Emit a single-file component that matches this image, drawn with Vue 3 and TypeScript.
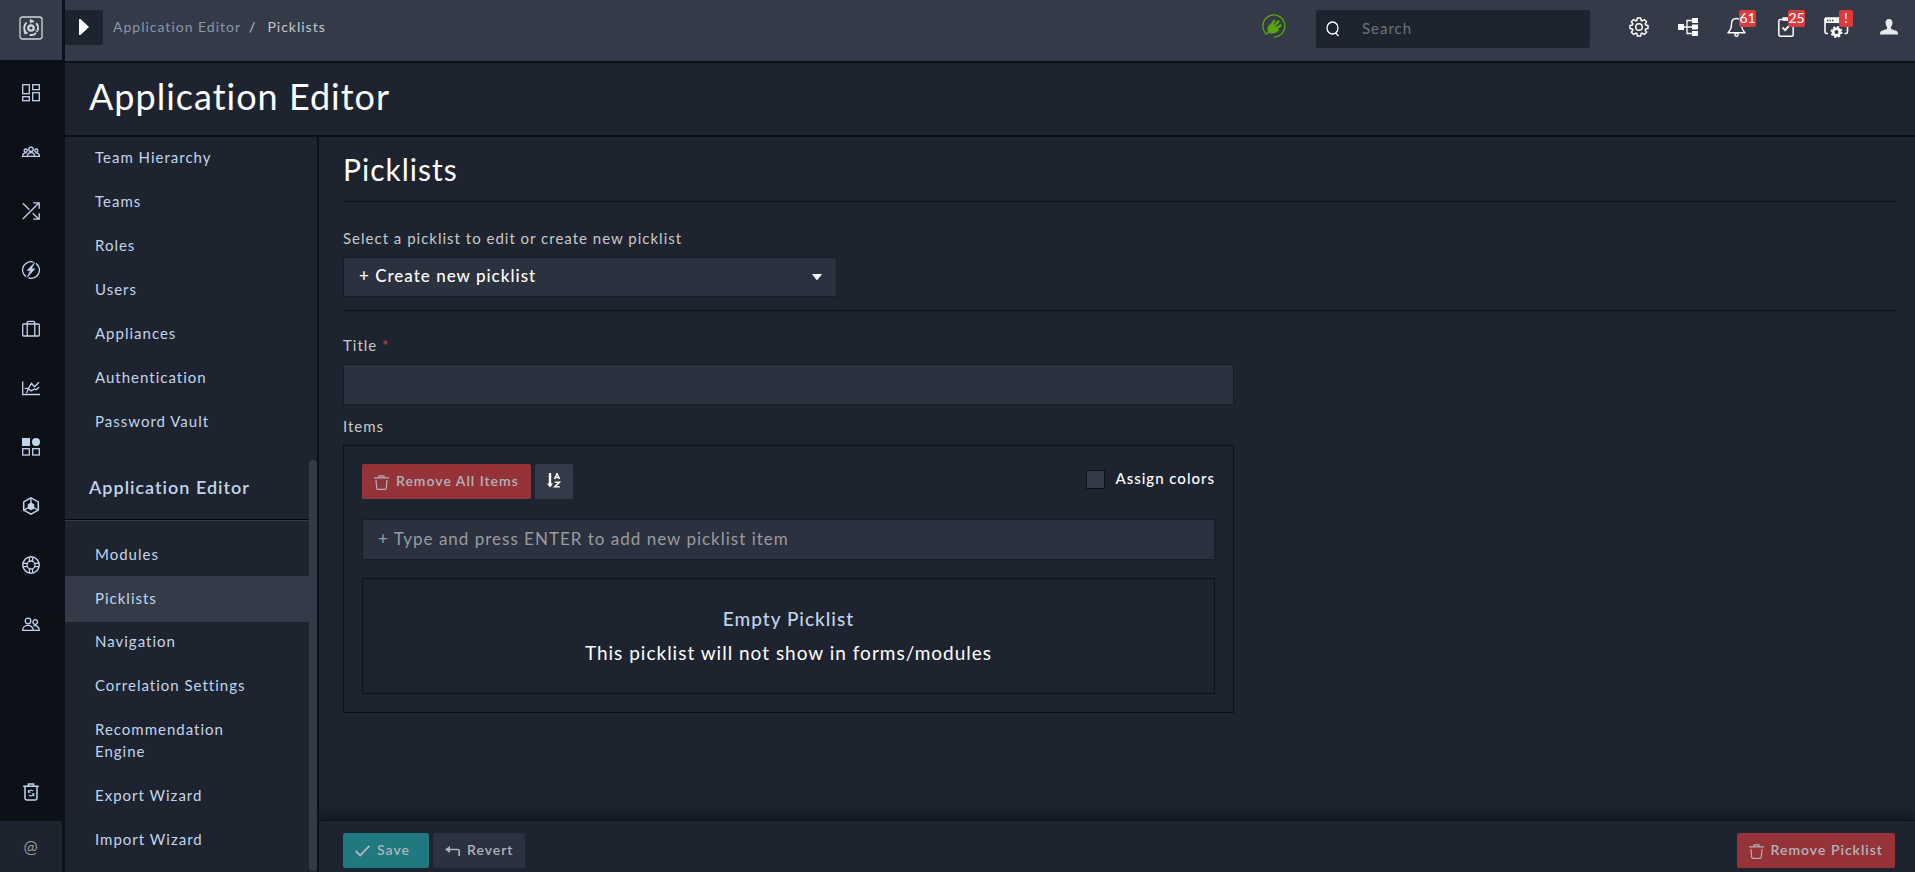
<script setup lang="ts">
import { ref } from 'vue'

interface NavItem {
  label: string
  active?: boolean
}

const securityItems: NavItem[] = [
  { label: 'Team Hierarchy' },
  { label: 'Teams' },
  { label: 'Roles' },
  { label: 'Users' },
  { label: 'Appliances' },
  { label: 'Authentication' },
  { label: 'Password Vault' },
]

const editorItems: NavItem[] = [
  { label: 'Modules' },
  { label: 'Picklists', active: true },
  { label: 'Navigation' },
  { label: 'Correlation Settings' },
  { label: 'Recommendation Engine' },
  { label: 'Export Wizard' },
  { label: 'Import Wizard' },
]

const railNames = [
  'Dashboard',
  'Queue',
  'Playbooks',
  'Automation',
  'Cases',
  'Reports',
  'Widgets',
  'Resources',
  'Help',
  'People',
] as const

const picklist = ref('new')
const title = ref('')
const newItem = ref('')
const search = ref('')
const assignColors = ref(false)
</script>

<template>
  <div class="app">
    <aside class="rail">
      <a href="#" class="logo" aria-label="Home">
        <svg width="24" height="24" viewBox="0 0 24 24" fill="none" stroke="#d3d6db">
          <rect x="1" y="1" width="22" height="22" rx="2.5" stroke-width="1.3" />
          <circle cx="12" cy="12" r="2.7" stroke-width="2.2" />
          <path d="M8.2 17.6A7 7 0 0 1 7.6 6.6M10.6 5.2A7 7 0 0 1 15 5.7M17.2 7.2A7 7 0 0 1 18.6 14M17.2 16.8A7 7 0 0 1 10.5 18.8" stroke-width="1.8" />
          <path d="M11 3.2l3 2-3 2M19.8 13l-1.6 3-2.2-2.4M5 14.5l.8 3.5 2.8-1" stroke-width="1" />
        </svg>
      </a>
      <nav class="rail-nav" aria-label="Main">
        <a v-for="(name, i) in railNames" :key="name" href="#" class="rail-link" :aria-label="name">
          <svg width="18" height="18" viewBox="0 0 18 18" fill="none" stroke="currentColor" stroke-width="1.3">
            <template v-if="i === 0">
              <rect x=".7" y=".7" width="6.6" height="9" />
              <rect x="10.7" y=".7" width="6.6" height="5" />
              <rect x=".7" y="12.7" width="6.6" height="4" />
              <rect x="10.7" y="8.7" width="6.6" height="8" />
            </template>
            <template v-else-if="i === 1">
              <circle cx="9" cy="6.3" r="2.2" />
              <circle cx="3.7" cy="7.6" r="1.6" />
              <circle cx="14.3" cy="7.6" r="1.6" />
              <path d="M5.5 13.4c0-5 7-5 7 0zM5 13.4H.6c0-2.5 1.5-3.8 4-3.4M13 13.4h4.4c0-2.5-1.5-3.8-4-3.4" />
            </template>
            <template v-else-if="i === 2">
              <path d="M.8 17L16.6 1.2M.8 1.2l6.6 6.6M10.8 11.2l5.8 5.8M11.2.8h6v6M11.2 17.2h6v-6" />
            </template>
            <template v-else-if="i === 3">
              <path d="M11.5 1.2A8.2 8.2 0 0 0 4 15.6M6.5 16.8A8.2 8.2 0 0 0 14 2.4" />
              <path d="M12.8 1.3L5 9.6h3.4L5 16.4l8-8.6H9.6z" fill="currentColor" stroke-width=".5" />
            </template>
            <template v-else-if="i === 4">
              <rect x=".7" y="4" width="16.6" height="12" rx="1" />
              <path d="M5.2 16V2.8q0-1.5 1.5-1.5h4.6q1.5 0 1.5 1.5V16" />
            </template>
            <template v-else-if="i === 5">
              <path d="M.7 2.5v13H18M2.6 9.4H6l3 2.5 3.5-2 1.6.8 3-2.4M4.5 14l2.8-6.2 2.2-3.4 3 3.4L17 3.2" />
            </template>
            <template v-else-if="i === 6">
              <rect x="0" y="0" width="8" height="8" fill="currentColor" stroke="none" />
              <circle cx="14" cy="4" r="4" fill="currentColor" stroke="none" />
              <rect x=".7" y="10.7" width="6.6" height="6.3" />
              <rect x="10.7" y="10.7" width="6.6" height="6.3" />
            </template>
            <template v-else-if="i === 7">
              <path d="M9 .9l7.3 4v8.2L9 17.1l-7.3-4V4.9z" stroke-width="1.5" />
              <path d="M9 1v5M2 13l4-2.2M16 13l-4-2.2" />
              <path d="M9 6l2.600 1.900v3.200L9 12.400l-2.600-1.300V7.900z" fill="currentColor" />
            </template>
            <template v-else-if="i === 8">
              <circle cx="9" cy="9" r="8.2" stroke-width="1.5" />
              <circle cx="9" cy="9" r="4" />
              <path d="M7.4 1v4.2M10.6 1v4.2M7.4 12.8V17M10.6 12.8V17M1 7.4h4.2M1 10.6h4.2M12.8 7.4H17M12.8 10.6H17" />
            </template>
            <template v-else>
              <circle cx="6" cy="6" r="2.8" />
              <circle cx="13.2" cy="7" r="2.3" />
              <path d="M.7 15.4c0-6.6 10.6-6.6 10.6 0zM11.3 11c3-1.2 6 .8 6 4.4h-6" />
            </template>
          </svg>
        </a>
      </nav>
      <a href="#" class="rail-link rail-bin" aria-label="Recycle bin">
        <svg width="18" height="18" viewBox="0 0 18 18" fill="none" stroke="currentColor" stroke-width="1.5">
          <path d="M1.2 3.2h15.6M6.4 3V1h5.2v2M3 3.4v11.9q0 1.6 1.6 1.6h8.8q1.6 0 1.6-1.6V3.4" />
          <path d="M6.5 9.2a2.7 2.7 0 0 1 4.7-1M6.5 7v2.2h2M11.8 10.8a2.7 2.7 0 0 1-4.8 1M11.8 13v-2.2h-2" stroke-width="1.1" />
        </svg>
      </a>
      <a href="#" class="rail-foot" aria-label="About">@</a>
    </aside>

    <div class="shell">
      <header class="topbar">
        <button type="button" class="expand" aria-label="Expand menu">
          <svg width="10" height="16" viewBox="0 0 10 16"><path d="M0 0h1.5L10 8l-8.500 8H0z" fill="#fff" /></svg>
        </button>
        <nav class="crumbs" aria-label="Breadcrumb">
          <a href="#">Application Editor</a>
          <span>/</span>
          <span class="crumb-here">Picklists</span>
        </nav>
        <a href="#" class="status" aria-label="Connection status">
          <svg width="24" height="24" viewBox="0 0 24 24" fill="none" stroke="#58a80c">
            <path d="M3.800 19.500A11 11 0 1 1 12 23" stroke-width="1.300" />
            <path d="M3.200 19.800q2 1 3.500-2.300" stroke-width="1.500" />
            <path d="M6.200 18.200c-1.600-3-.5-7.200 3-8.700l1.400-.4 6.600 6.800c-2.500 3.300-8.200 5-11 2.300z" fill="#58a80c" stroke="none" />
            <path d="M10.500 9.500l1.800-2.700M13.300 11l3.200-3.500M15.500 13.500l3-2" stroke-width="2.400" stroke-linecap="round" />
          </svg>
        </a>
        <label class="search">
          <svg width="14" height="16" viewBox="0 0 14 16" fill="none" stroke="#fff" stroke-width="1.300">
            <ellipse cx="6.500" cy="7" rx="5.500" ry="6" /><path d="M9.500 12l3 3" />
          </svg>
          <input v-model="search" type="text" placeholder="Search" aria-label="Search" />
        </label>
        <div class="tools">
          <button type="button" class="tool" aria-label="Settings">
            <svg width="20" height="20" viewBox="0 0 20 20" fill="none" stroke="#fff" stroke-width="1.500" stroke-linejoin="round">
              <path d="M8.300 1h3.400l.5 2.500 1 .4 2.100-1.400 2.300 2.300-1.400 2.100.4 1 2.400.5v3.200l-2.400.5-.4 1 1.400 2.100-2.300 2.300-2.100-1.400-1 .4-.5 2.500H8.300l-.5-2.500-1-.4-2.100 1.400-2.300-2.300 1.400-2.100-.4-1L1 11.600V8.400l2.400-.5.4-1-1.400-2.100 2.300-2.300 2.100 1.400 1-.4z" />
              <circle cx="10" cy="10" r="3.300" />
            </svg>
          </button>
          <button type="button" class="tool" aria-label="Hierarchy">
            <svg width="20" height="18" viewBox="0 0 20 18" fill="#fff">
              <path d="M0 6h6v6H0zM14 0h6v5h-6zM14 6.500h6v5h-6zM14 13h6v5h-6z" />
              <path d="M5 9h9M14 2.500H9v13h5" fill="none" stroke="#fff" stroke-width="1.300" />
            </svg>
          </button>
          <button type="button" class="tool" aria-label="Notifications, 61">
            <svg width="19" height="20" viewBox="0 0 19 20" fill="none" stroke="#fff" stroke-width="1.400" stroke-linejoin="round">
              <path d="M9.500 1.500c-3.500 0-5 2.500-5 5.500 0 5-1.200 6.500-3.500 8.700h17c-2.300-2.200-3.500-3.700-3.500-8.700 0-3-1.500-5.500-5-5.500z" />
              <circle cx="9.500" cy="17.700" r="1.600" />
            </svg>
            <span class="badge">61</span>
          </button>
          <button type="button" class="tool" aria-label="Tasks, 25">
            <svg width="16" height="20" viewBox="0 0 16 20" fill="none" stroke="#fff" stroke-width="1.500">
              <rect x=".8" y="2.500" width="14.400" height="16.700" rx="1.500" />
              <path d="M4.500 2h7" stroke-width="3.500" />
              <path d="M4.500 10.500l2.600 2.600 4.600-5" stroke-width="1.800" />
            </svg>
            <span class="badge">25</span>
          </button>
          <button type="button" class="tool" aria-label="System alerts">
            <svg width="25" height="21" viewBox="0 0 25 21" fill="none" stroke="#fff">
              <path d="M4 16.500H2.500q-1.500 0-1.500-1.500V2q0-1 1-1h20.500q1 0 1 1v13q0 1.500-1.500 1.500h-1.500" stroke-width="1.600" />
              <path d="M1 1h22.500v5H1z" fill="#fff" stroke="none" />
              <path d="M3 3.500h7" stroke="#343a47" stroke-width="1.500" stroke-dasharray="1.500 1" />
              <circle cx="12.500" cy="15" r="3.400" stroke-width="2.800" />
              <circle cx="12.500" cy="15" r="5.200" stroke-width="1.600" stroke-dasharray="2.080 2" />
            </svg>
            <span class="badge badge-alert">!</span>
          </button>
          <button type="button" class="tool" aria-label="Profile">
            <svg width="18" height="16" viewBox="0 0 18 16" fill="#e6e8ea">
              <path d="M9 0c2.500 0 3.700 1.800 3.500 4-.2 2-1 3.300-1.500 4-.2 1.500 0 2 .8 2.300l4.300 1.500c1.600.6 1.900 2 1.900 3.700H0c0-1.700.3-3.100 1.900-3.700l4.300-1.500c.8-.3 1-.8.8-2.300-.5-.7-1.300-2-1.500-4C5.300 1.800 6.500 0 9 0z" />
            </svg>
          </button>
        </div>
      </header>

      <div class="page-head"><h1>Application Editor</h1></div>

      <div class="body">
        <nav class="side" aria-label="Settings">
          <ul class="side-list">
            <li v-for="item in securityItems" :key="item.label">
              <a href="#" class="side-link">{{ item.label }}</a>
            </li>
          </ul>
          <h2 class="side-title">Application Editor</h2>
          <ul class="side-list">
            <li v-for="item in editorItems" :key="item.label">
              <a href="#" class="side-link" :class="{ active: item.active }">{{ item.label }}</a>
            </li>
          </ul>
          <span class="thumb"></span>
        </nav>

        <main class="main">
          <div class="content">
            <h2 class="title">Picklists</h2>
            <section class="chooser">
              <label for="picklist">Select a picklist to edit or create new picklist</label>
              <div class="select-wrap">
                <select id="picklist" v-model="picklist" class="field">
                  <option value="new">+ Create new picklist</option>
                </select>
                <svg class="caret" width="10" height="6" viewBox="0 0 10 6"><path d="M0 0h10L5.800 5.500q-.8.800-1.600 0z" fill="#fff" /></svg>
              </div>
            </section>
            <form class="editor" @submit.prevent>
              <label for="title">Title <span class="required">*</span></label>
              <input id="title" v-model="title" type="text" class="field" />
              <div class="items-label">Items</div>
              <div class="items">
                <div class="items-bar">
                  <button type="button" class="btn btn-red">
                    <svg class="btn-icon" width="15" height="15" viewBox="0 0 15 15" fill="none" stroke="currentColor" stroke-width="1.200">
                      <path d="M0 2.800h15M5 2.500V.8h5v1.700M2 5l.7 8.200q.1 1.200 1.200 1.200h7.200q1.100 0 1.200-1.200L13 5" />
                    </svg>
                    Remove All Items
                  </button>
                  <button type="button" class="btn btn-sort" aria-label="Sort A to Z">
                    <svg width="14" height="15" viewBox="0 0 14 15" fill="none" stroke="#fff">
                      <path d="M3 0v12" stroke-width="2.400" />
                      <path d="M0 10.500h6L3 14.500z" fill="#fff" stroke="none" />
                      <path d="M7.500 6l2.500-5.500L12.500 6M8.300 4.500h3.400M7.800 9.300h4.500l-4.500 4.400h5" stroke-width="1.500" />
                    </svg>
                  </button>
                  <label class="check">
                    <input v-model="assignColors" type="checkbox" />
                    Assign colors
                  </label>
                </div>
                <input v-model="newItem" type="text" class="field" placeholder="+ Type and press ENTER to add new picklist item" aria-label="New picklist item" />
                <div class="empty">
                  <p class="empty-title">Empty Picklist</p>
                  <p>This picklist will not show in forms/modules</p>
                </div>
              </div>
            </form>
          </div>

          <footer class="actions">
            <button type="button" class="btn btn-teal">
              <svg class="btn-icon" width="15" height="12" viewBox="0 0 15 12" fill="none" stroke="currentColor" stroke-width="1.800"><path d="M.6 6l4.600 4.500L14.400 1" /></svg>
              Save
            </button>
            <button type="button" class="btn btn-grey">
              <svg class="btn-icon" width="15" height="12" viewBox="0 0 15 12" fill="none" stroke="currentColor" stroke-width="1.600">
                <path d="M3 4.500h9.700q1.500 0 1.500 1.500v5" /><path d="M0 4.500L5 1v7z" fill="currentColor" stroke="none" />
              </svg>
              Revert
            </button>
            <button type="button" class="btn btn-red push">
              <svg class="btn-icon" width="15" height="15" viewBox="0 0 15 15" fill="none" stroke="currentColor" stroke-width="1.200">
                <path d="M0 2.800h15M5 2.500V.8h5v1.700M2 5l.7 8.200q.1 1.200 1.200 1.200h7.200q1.100 0 1.200-1.200L13 5" />
              </svg>
              Remove Picklist
            </button>
          </footer>
        </main>
      </div>
    </div>
  </div>
</template>

<style>
body {
  margin: 0;
  background: #1d2430;
}
</style>

<style scoped>
.app {
  display: flex;
  height: 100vh;
  overflow: hidden;
  background: #0c1118;
  color: #fff;
  font-family: Lato, 'Open Sans', sans-serif;
  font-size: 15px;
  line-height: 22px;
  letter-spacing: 1px;
}
.app *,
.app *::before {
  box-sizing: border-box;
}
h1,
h2,
p,
ul {
  margin: 0;
  padding: 0;
}
a {
  color: inherit;
  text-decoration: none;
}
button,
input,
select {
  margin: 0;
  font: inherit;
  letter-spacing: inherit;
  color: inherit;
  border-radius: 0;
}
svg {
  display: block;
  flex: none;
}

.rail {
  display: flex;
  flex: none;
  flex-direction: column;
  width: 62px;
  color: #c3d4ea;
}
.logo {
  display: flex;
  align-items: center;
  justify-content: center;
  height: 60px;
  padding-bottom: 4px;
  margin-bottom: 3px;
  background: #343a47;
}
.rail-link {
  display: flex;
  align-items: center;
  justify-content: center;
  height: 59px;
}
.rail-bin {
  margin-top: auto;
}
.rail-foot {
  display: flex;
  align-items: center;
  justify-content: center;
  height: 51px;
  background: #1d2430;
  color: #9a9a9a;
  font-size: 17px;
}

.shell {
  display: flex;
  flex: 1;
  flex-direction: column;
  min-width: 0;
  padding-left: 3px;
}
.topbar {
  display: flex;
  flex: none;
  align-items: flex-start;
  height: 61px;
  padding: 10px 17px 0 0;
  background: #343a47;
}
.expand {
  display: flex;
  align-items: center;
  justify-content: center;
  width: 38px;
  height: 35px;
  padding: 0 0 2px;
  border: 0;
  border-radius: 2px;
  background: #1d2430;
}
.crumbs {
  display: flex;
  gap: 8px;
  padding: 6px 0 0 10px;
  font-size: 14px;
  color: #c5c8cc;
}
.crumbs a {
  color: #8996ab;
}
.crumb-here {
  padding-left: 3px;
}
.status {
  margin: 4px 30px 0 auto;
}
.search {
  display: flex;
  align-items: center;
  gap: 22px;
  width: 274px;
  height: 38px;
  padding: 0 10px;
  border-radius: 2px;
  background: #1d2430;
}
.search input {
  flex: 1;
  min-width: 0;
  padding: 0 0 2px;
  border: 0;
  outline: 0;
  background: none;
  font-size: 15px;
}
.search input::placeholder {
  color: #6c727b;
  opacity: 1;
}
.tools {
  display: flex;
  padding-left: 24px;
}
.tool {
  position: relative;
  display: flex;
  align-items: center;
  justify-content: center;
  width: 49px;
  height: 34px;
  padding: 0;
  border: 0;
  background: none;
}
.tool:last-child {
  width: 36px;
  justify-content: flex-end;
}
.tool:nth-child(5) {
  width: 52px;
}
.badge {
  position: absolute;
  top: 0;
  left: 27px;
  min-width: 17px;
  height: 17px;
  border-radius: 2px;
  background: #dc3a3d;
  color: #fff;
  font-size: 14px;
  line-height: 16px;
  text-align: center;
  letter-spacing: 0;
}
.badge-alert {
  left: 29px;
  min-width: 14px;
}

.page-head {
  flex: none;
  height: 76px;
  padding: 9px 24px 0;
  border: solid #0c1118;
  border-width: 2px 0;
  background: #1d2430;
}
h1 {
  font-size: 36px;
  font-weight: 400;
  line-height: 48px;
}
.body {
  display: flex;
  flex: 1;
  min-height: 0;
}

.side {
  position: relative;
  flex: none;
  width: 254px;
  padding-right: 8px;
  overflow: hidden;
  border-right: 2px solid #0c1118;
  background: #1d2430;
  color: #c3d4ea;
}
.side-list {
  list-style: none;
}
.side-list:first-child {
  margin-top: -2px;
}
.side-link {
  display: block;
  padding: 11px 60px 11px 30px;
}
.side-link.active {
  padding-bottom: 13px;
  margin-bottom: -3px;
  background: #343a47;
}
.side-title {
  height: 77px;
  padding: 33px 24px 0;
  margin-bottom: 12px;
  border-bottom: 1px solid #05080c;
  box-shadow: 0 1px 0 #343a47;
  font-size: 18px;
  font-weight: 600;
}
.thumb {
  position: absolute;
  top: 323px;
  right: 0;
  bottom: 1px;
  width: 8px;
  border-radius: 4px;
  background: #343a47;
}

.main {
  display: flex;
  flex: 1;
  flex-direction: column;
  min-width: 0;
  background: #1d2430;
}
.content {
  flex: 1;
  min-height: 0;
  padding: 0 20px 0 24px;
}
.title {
  padding: 13px 0;
  border-bottom: 1px solid #0c1118;
  font-size: 30px;
  font-weight: 400;
  line-height: 38px;
}
.chooser {
  padding: 25px 0 13px;
  border-bottom: 1px solid #0c1118;
}
.chooser > label,
.editor > label,
.items-label {
  display: block;
  color: #c9c9c9;
}
.select-wrap {
  position: relative;
  width: 100%;
  max-width: 494px;
  margin-top: 8px;
}
.field {
  display: block;
  width: 100%;
  height: 41px;
  padding: 0 15px 2px;
  border: 1px solid #171c25;
  outline: 0;
  background: #2b313e;
  font-size: 17px;
}
.field::placeholder {
  color: #999b9e;
  opacity: 1;
}
select.field {
  height: 40px;
  appearance: none;
  font-weight: 500;
}
.caret {
  position: absolute;
  top: 17px;
  right: 15px;
}
.editor {
  max-width: 891px;
  padding-top: 23px;
}
.editor > label {
  margin-bottom: 8px;
}
.required {
  color: #dc3a3d;
}
.items-label {
  margin: 10px 0 8px;
}
.items {
  padding: 18px;
  border: 1px solid #0c1118;
}
.items-bar {
  display: flex;
  gap: 4px;
  margin-bottom: 20px;
}
.btn {
  display: flex;
  align-items: center;
  gap: 7px;
  height: 35px;
  padding: 0 12px 2px;
  border: 0;
  border-radius: 2px;
  font-weight: 600;
  font-size: 14px;
  white-space: nowrap;
  color: #b0b4ba;
}
.btn-icon {
  margin-top: 3px;
}
.btn-red {
  background: #963338;
}
.btn-teal {
  padding-right: 19px;
  background: #20797f;
}
.btn-grey {
  background: #2b313e;
}
.btn-sort {
  background: #343a47;
}
.push {
  margin-left: auto;
}
.check {
  display: flex;
  align-items: flex-start;
  gap: 10px;
  margin-left: auto;
  padding-top: 3px;
  font-weight: 500;
}
.check input {
  width: 19px;
  height: 19px;
  margin-top: 3px;
  border: 1px solid #0c1118;
  background: #343a47;
  appearance: none;
}
.check input:checked {
  background: #20797f;
}
.empty {
  margin-top: 18px;
  padding: 23px 0;
  border: 1px solid #0c1118;
  font-size: 19px;
  line-height: 34px;
  font-weight: 400;
  text-align: center;
}
.empty-title {
  color: #c3d4ea;
  font-weight: 500;
}
.actions {
  display: flex;
  gap: 4px;
  padding: 12px 20px 4px 24px;
  border-top: 1px solid #0c1118;
  box-shadow: 0 -4px 14px rgb(0 0 0 / 50%);
  background: #1d2430;
}
</style>
